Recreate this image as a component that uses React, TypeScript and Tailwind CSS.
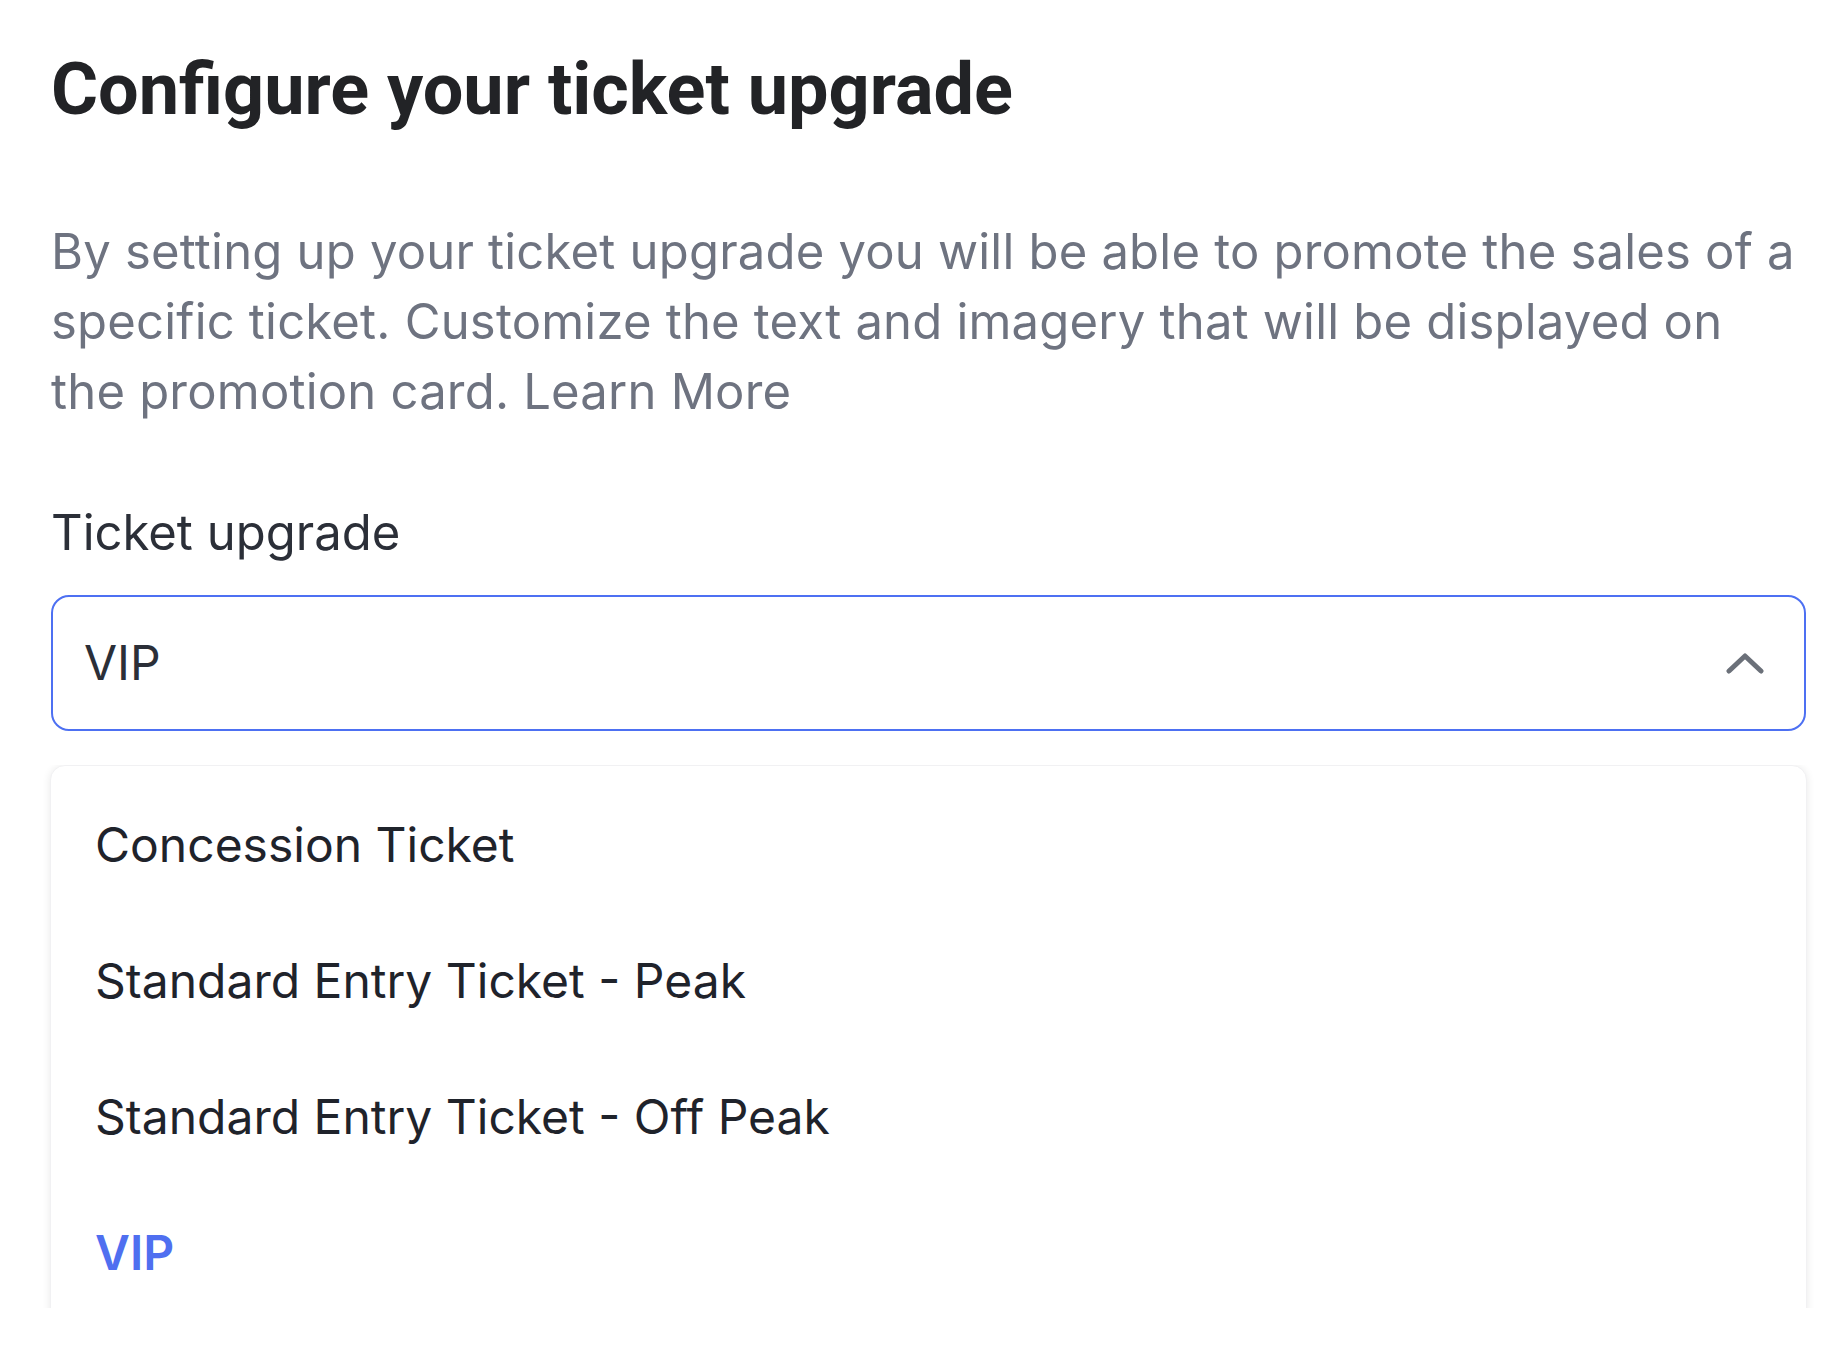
import React from "react";

const options = [
    "Concession Ticket",
    "Standard Entry Ticket - Peak",
    "Standard Entry Ticket - Off Peak",
    "VIP",
];

const App = () => {
    const selected = "VIP";

    return (
        <div className="w-full min-h-screen bg-white font-['Inter','Liberation_Sans',sans-serif]">
            <div className="pl-[51px] pr-[38px] pt-[46px]">
                <h1 className="font-['Roboto','Liberation_Sans',sans-serif] text-[72px] leading-[88px] font-bold text-[#222326]">
                    Configure your ticket upgrade
                </h1>

                <p className="mt-[83px] text-[49px] leading-[70px] tracking-[0.2px] text-[#6e7380]">
                    By setting up your ticket upgrade you will be able to promote the sales of a<br />
                    specific ticket. Customize the text and imagery that will be displayed on<br />
                    the promotion card. <a className="text-[#6e7380]">Learn More</a>
                </p>

                <label className="block mt-[76px] text-[49px] leading-[60px] text-[#2b2f38]">
                    Ticket upgrade
                </label>

                <button className="mt-[32px] w-full h-[136px] flex items-center justify-between border-2 border-[#4d70f2] rounded-[18px] pl-[31px] pr-[40px] text-left">
                    <span className="text-[48px] leading-[60px] text-[#2b2f38]">{selected}</span>
                    <svg width="38" height="24" viewBox="0 0 38 24" fill="none">
                        <path d="M3 20 L19 5 L35 20" stroke="#6b7079" strokeWidth="5" strokeLinecap="round" strokeLinejoin="round" />
                    </svg>
                </button>
            </div>

            {/* dropdown list, cut off at the bottom like the screenshot */}
            <div className="mt-[34px] h-[543px] overflow-hidden pl-[50px] pr-[37px]">
                <ul className="bg-white rounded-[15px] border border-[#f1f1f3] shadow-[0_1px_8px_rgba(0,0,0,0.09)] pt-[11px] pb-[40px]">
                    {options.map((o) => (
                        <li
                            key={o}
                            className={
                                o === selected
                                    ? "h-[136px] flex items-center pl-[44px] text-[48px] leading-[60px] font-semibold text-[#4f6ff0]"
                                    : "h-[136px] flex items-center pl-[44px] text-[48px] leading-[60px] text-[#1f232b]"
                            }
                        >
                            {o}
                        </li>
                    ))}
                </ul>
            </div>
        </div>
    );
};

export default App;
